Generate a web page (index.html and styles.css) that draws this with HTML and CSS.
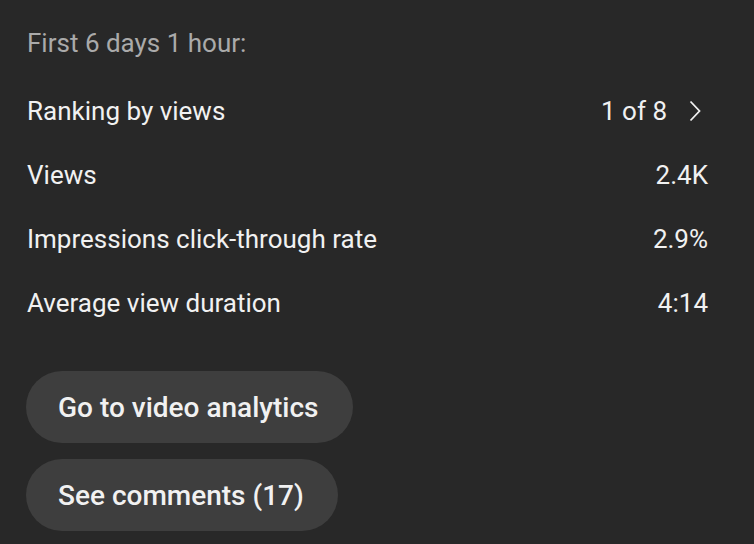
FILE: index.html
```html
<!DOCTYPE html>
<html>
<head>
<meta charset="utf-8">
<link rel="stylesheet" href="styles.css">
</head>
<body>
<div class="card">
  <div class="heading">First 6 days 1 hour:</div>
  <div class="stats">
    <div class="row">
      <span class="label">Ranking by views</span>
      <span class="value rank">1 of 8
        <svg class="chev" width="12" height="22" viewBox="0 0 12 22"><path d="M1.5 1.5 L10.5 11 L1.5 20.5" fill="none" stroke="#f1f1f1" stroke-width="1.8"/></svg>
      </span>
    </div>
    <div class="row"><span class="label">Views</span><span class="value">2.4K</span></div>
    <div class="row"><span class="label">Impressions click-through rate</span><span class="value">2.9%</span></div>
    <div class="row"><span class="label">Average view duration</span><span class="value">4:14</span></div>
  </div>
  <div class="actions">
    <button class="pill">Go to video analytics</button>
    <button class="pill">See comments (17)</button>
  </div>
</div>
</body>
</html>
```

FILE: styles.css
```css
html, body {
  margin: 0;
  padding: 0;
  background: #282828;
}
body {
  font-family: Roboto, "Noto Sans", sans-serif;
  color: #f1f1f1;
  width: 754px;
  height: 544px;
  overflow: hidden;
}
.card {
  padding: 28px 46px 0 27px;
  display: flex;
  flex-direction: column;
}
.heading {
  font-size: 26px;
  line-height: 30px;
  color: #aaaaaa;
}
.stats {
  margin-top: 21px;
  display: flex;
  flex-direction: column;
}
.row {
  height: 64px;
  display: flex;
  align-items: center;
  justify-content: space-between;
  font-size: 26px;
  line-height: 30px;
}
.value.rank {
  display: flex;
  align-items: center;
  gap: 22px;
  margin-right: 7px;
}
.chev {
  display: block;
}
.actions {
  margin-top: 36px;
  display: flex;
  flex-direction: column;
  align-items: flex-start;
  gap: 16px;
}
.pill {
  height: 72px;
  border: none;
  border-radius: 36px;
  background: #3e3e3e;
  color: #f1f1f1;
  font-family: Roboto, "Noto Sans", sans-serif;
  font-weight: 500;
  font-size: 28px;
  padding: 0 34px 0 32px;
  margin-left: -1px;
}
```
